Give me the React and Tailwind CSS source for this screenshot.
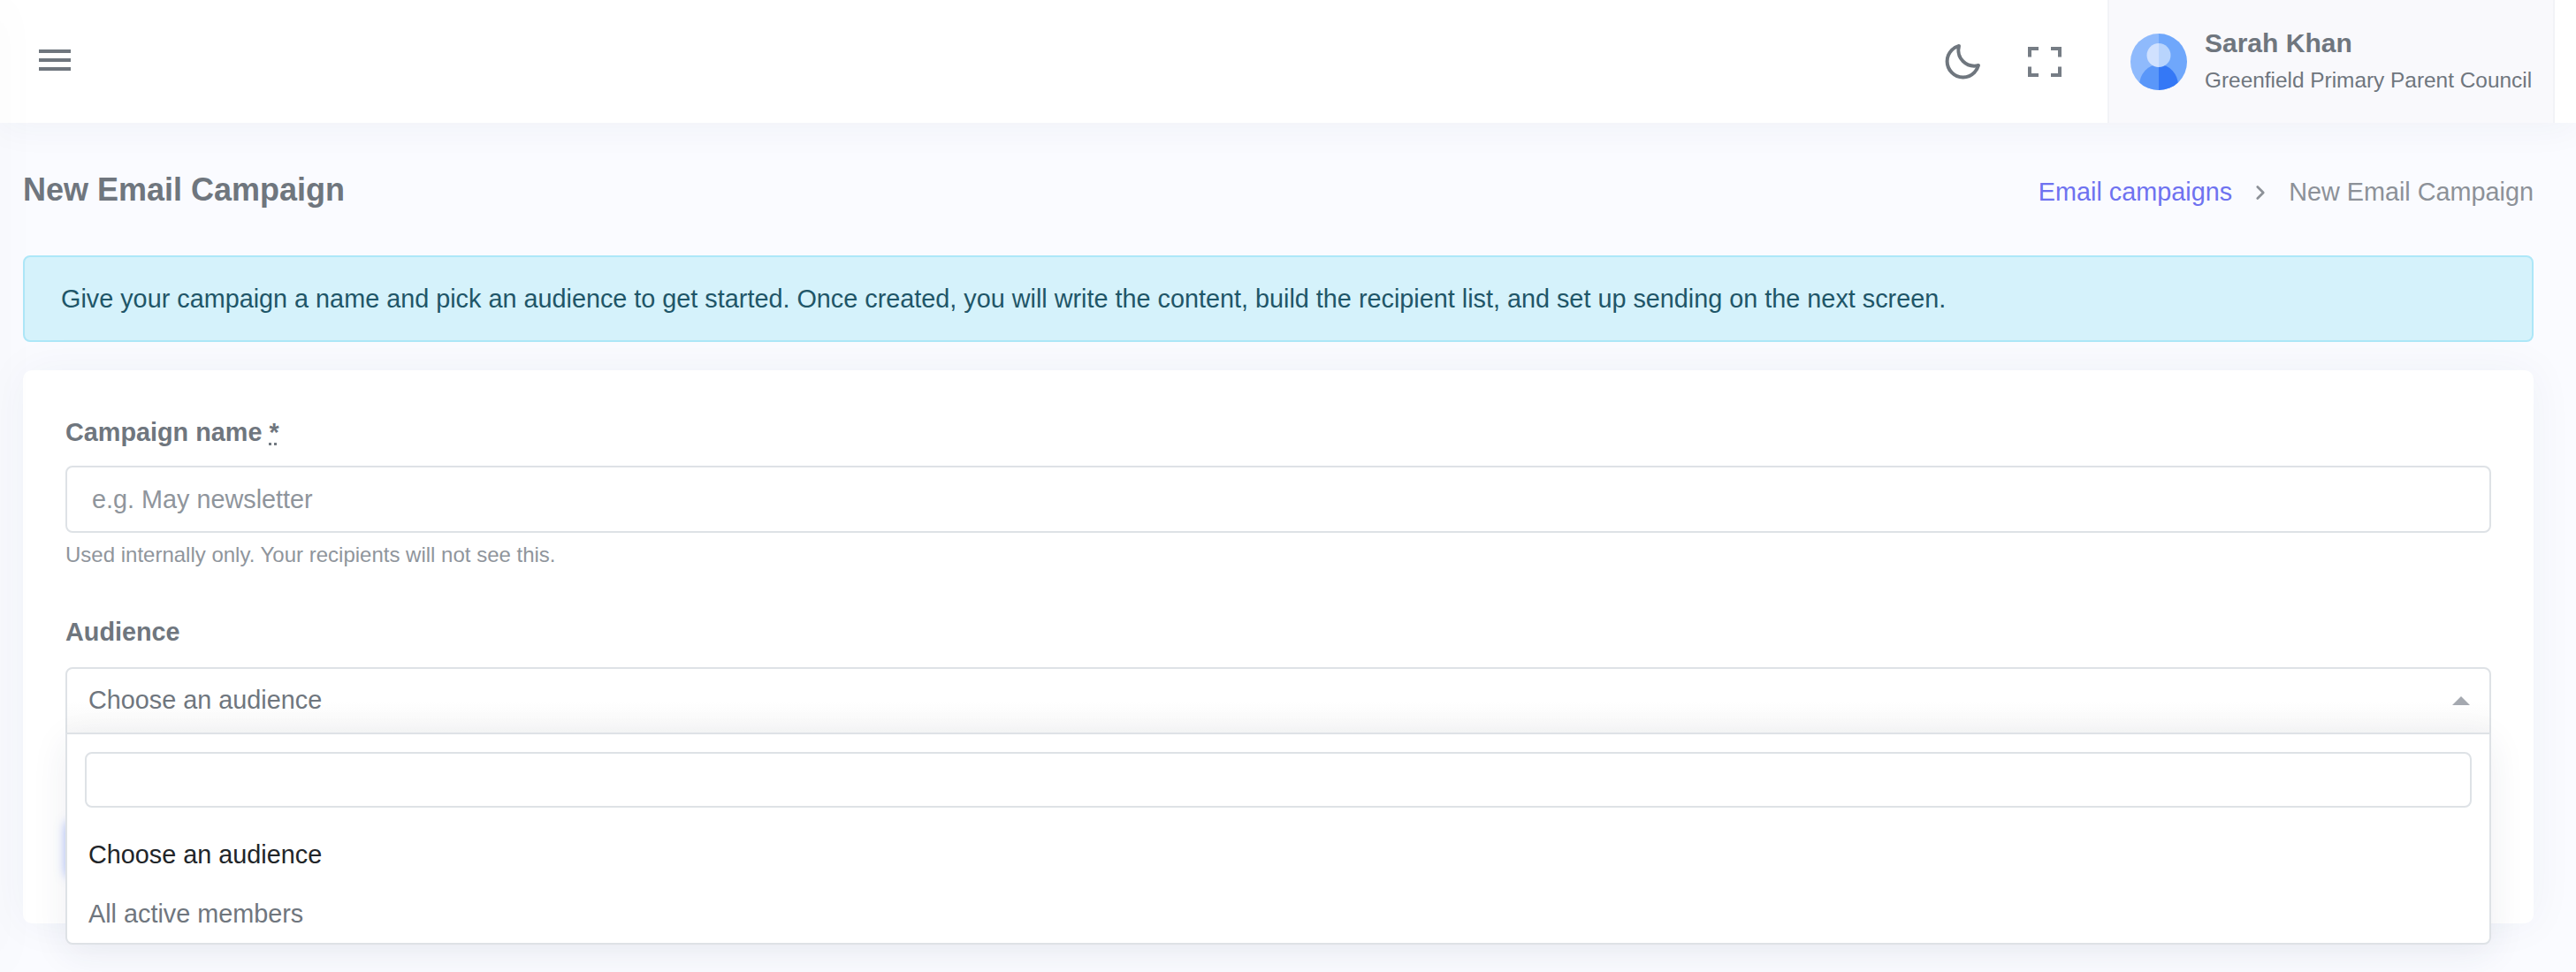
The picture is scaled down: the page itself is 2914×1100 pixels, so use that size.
import { BiMoon } from 'react-icons/bi';
import { ChevronRight } from 'lucide-react';

function Avatar() {
  return (
    <svg width="64" height="64" viewBox="0 0 64 64" className="shrink-0">
      <defs>
        <clipPath id="avatar-clip"><circle cx="32" cy="32" r="32" /></clipPath>
      </defs>
      <g clipPath="url(#avatar-clip)">
        <rect x="0" y="0" width="32" height="64" fill="#8fbafc" />
        <rect x="32" y="0" width="32" height="64" fill="#6fa7fb" />
        <path d="M32 35a22 24 0 0 0-22 24v5h22z" fill="#5a97f9" />
        <path d="M32 35a22 24 0 0 1 22 24v5H32z" fill="#3478f6" />
        <path d="M32 11a13.500 13.500 0 0 0 0 27z" fill="#d0e1fe" />
        <path d="M32 11a13.500 13.500 0 0 1 0 27z" fill="#b8d4fd" />
      </g>
    </svg>
  );
}

function FullscreenIcon() {
  return (
    <svg width="38" height="34" viewBox="0 0 38 34" fill="#767d85">
      <path d="M0 0h12v4H4v7.500H0zM26 0h12v11.500h-4V4h-8zM0 22.500h4V30h8v4H0zM34 22.500h4V34H26v-4h8z" />
    </svg>
  );
}

function Header() {
  return (
    <header className="relative z-10 flex h-[139px] items-center bg-white pl-[44px] pr-[24px] shadow-[0_4px_40px_rgba(40,50,90,0.05)]">
      <div className="mb-[3px] flex flex-col gap-[6px]">
        <span className="h-[4px] w-[36px] bg-[#6f767e]" />
        <span className="h-[4px] w-[36px] bg-[#6f767e]" />
        <span className="h-[4px] w-[36px] bg-[#6f767e]" />
      </div>
      <div className="ml-auto flex items-center">
        <BiMoon size={48} className="text-[#6f767e]" />
        <div className="ml-[50px] mr-[52px] flex"><FullscreenIcon /></div>
      </div>
      <div className="flex h-full w-[506px] items-center gap-[20px] border-x-2 border-[#f2f3f7] bg-[#f9f9fc] pl-[24px]">
        <Avatar />
        <div className="whitespace-nowrap">
          <div className="text-[30px] font-bold leading-[36px] text-[#6f767e]">Sarah Khan</div>
          <div className="mt-[6px] text-[24.400px] leading-[36px] text-[#6f767e]">Greenfield Primary Parent Council</div>
        </div>
      </div>
    </header>
  );
}

function PageTitle() {
  return (
    <div className="flex h-[150px] items-center justify-between">
      <h1 className="mt-[2px] text-[36px] font-bold text-[#6f767e]">New Email Campaign</h1>
      <nav className="mt-[8px] flex items-center text-[28.800px] text-[#8c9198]">
        <span className="text-[#6e72f0]">Email campaigns</span>
        <ChevronRight size={26} strokeWidth={2.500} className="mx-[19px] text-[#8c9198]" />
        <span>New Email Campaign</span>
      </nav>
    </div>
  );
}

function AudienceSelect() {
  return (
    <div className="relative">
      <div className="flex h-[76px] items-center justify-between rounded-t-[8px] border-2 border-[#dee2e6] bg-gradient-to-b from-white via-white to-[#f8f8f8] pl-[24px] pr-[22px]">
        <span className="text-[28.800px] text-[#6f767e]">Choose an audience</span>
        <span className="h-0 w-0 border-x-[10px] border-b-[10px] border-x-transparent border-b-[#a5a9b0]" />
      </div>
      <div className="absolute left-0 right-0 top-[74px] z-20 h-[240px] rounded-b-[8px] border-2 border-[#dee2e6] bg-white shadow-[0_10px_40px_rgba(40,50,90,0.08)]">
        <div className="px-[20px] pt-[20px]">
          <input className="block h-[63px] w-full rounded-[8px] border-2 border-[#dee2e6] bg-white outline-none" />
        </div>
        <div className="mt-[20px] flex h-[67px] items-center px-[24px] text-[28.800px] text-[#212529]">Choose an audience</div>
        <div className="flex h-[67px] items-center px-[24px] text-[28.800px] text-[#6f767e]">All active members</div>
      </div>
    </div>
  );
}

export default function App() {
  return (
    <div className="relative h-[1100px] w-full overflow-hidden bg-[#fafbff] font-['Liberation_Sans',Arial,sans-serif]">
      <div className="absolute -left-[10px] top-0 z-20 h-full w-[10px] shadow-[0_0_50px_rgba(40,50,90,0.06)]" />
      <Header />
      <main className="pl-[26px] pr-[48px]">
        <PageTitle />
        <div className="mb-[32px] flex h-[98px] items-center rounded-[8px] border-2 border-[#ade7f8] bg-[#d5f2fb] pl-[41px] pt-[2px] text-[28.800px] text-[#1f5668]">
          Give your campaign a name and pick an audience to get started. Once created, you will write the content, build the recipient list, and set up sending on the next screen.
        </div>
        <section className="h-[626px] rounded-[10px] bg-white px-[48px] pt-[48px] shadow-[0_0_50px_rgba(40,50,90,0.05)]">
          <label className="mb-[16px] block text-[28.800px] font-bold leading-[44px] text-[#6f767e]">
            Campaign name <abbr title="required" className="underline decoration-dotted">*</abbr>
          </label>
          <input
            placeholder="e.g. May newsletter"
            className="block h-[76px] w-full rounded-[8px] border-2 border-[#dee2e6] bg-white px-[28px] text-[28.800px] text-[#6f767e] outline-none placeholder:text-[#8f959c]"
          />
          <p className="mt-[7px] text-[24px] leading-[36px] text-[#8f959c]">Used internally only. Your recipients will not see this.</p>
          <label className="mb-[18px] mt-[47px] block text-[28.800px] font-bold leading-[44px] text-[#6f767e]">Audience</label>
          <AudienceSelect />
          <button className="mt-[98px] block h-[64px] w-[300px] rounded-[8px] bg-[#6e8ff5] shadow-[0_0_12px_rgba(90,130,245,0.5)]" />
        </section>
      </main>
    </div>
  );
}
